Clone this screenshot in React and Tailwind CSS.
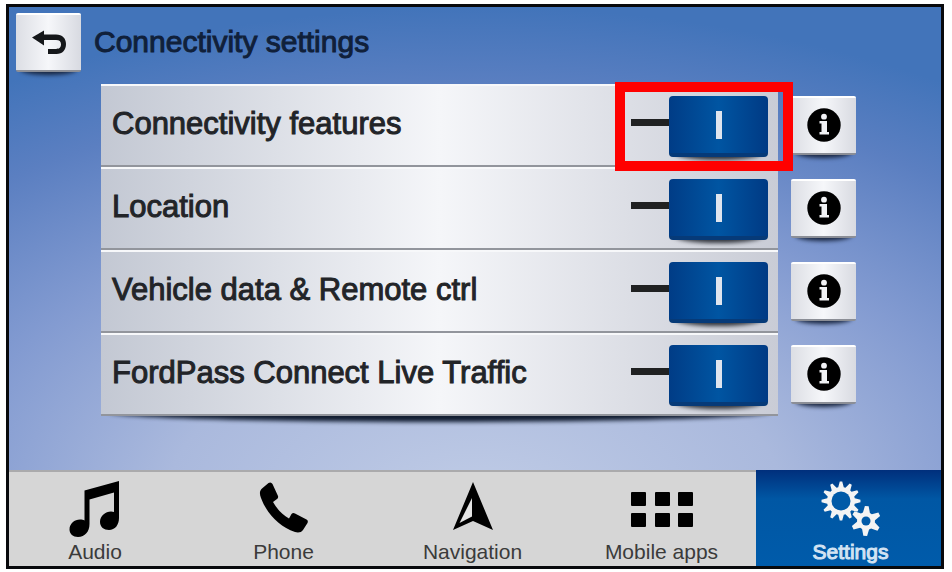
import { useState } from 'react'

const features = [
  { id: 'connectivity', label: 'Connectivity features', highlighted: true },
  { id: 'location', label: 'Location' },
  { id: 'vehicle-data', label: 'Vehicle data & Remote ctrl' },
  { id: 'live-traffic', label: 'FordPass Connect Live Traffic' },
]

function BackIcon() {
  return (
    <svg viewBox="0 0 36 26" className="h-[26px] w-9" aria-hidden="true">
      <path d="M1 7.500 L13 0.500 V4.500 H25 C31.500 4.500 35 8.500 35 14 C35 20 31.500 24 25.500 24 H17 V19 H25 C28.500 19 30 17.200 30 14.300 C30 11.500 28.500 10 25 10 H13 V15.500 Z" fill="#15171a" />
    </svg>
  )
}

function InfoIcon() {
  return (
    <svg viewBox="0 0 34 36" className="h-9 w-[34px]" aria-hidden="true">
      <circle cx="17" cy="17" r="16.700" fill="#000" />
      <circle cx="17" cy="8.700" r="2.900" fill="#f1f2f5" />
      <path d="M12.500 13 H20 V24 H22 V26.500 H12.500 V24 H14.500 V15.500 H12.500 Z" fill="#f1f2f5" />
    </svg>
  )
}

function AudioIcon() {
  return (
    <svg viewBox="0 0 52 56" className="h-14 w-[52px]" aria-hidden="true">
      <path d="M15.500 9.500 L50 0 V37 C50 44 46 49 40 49 C35 49 31 46 31 41 C31 35 36.500 30.500 42 30.500 C43.200 30.500 44.300 30.700 45 31 V11.500 L20.500 18.500 V43 C20.500 50.500 16 56 9 56 C4 56 0.500 53 0.500 48.500 C0.500 42.500 5.500 38.500 11 38.500 C12.800 38.500 14.500 38.800 15.500 39.500 Z" fill="#000" />
    </svg>
  )
}

function PhoneIcon() {
  return (
    <svg viewBox="0 0 50 56" className="h-14 w-[50px]" aria-hidden="true">
      <path d="M3 7.500 L9.500 2 Q12 0.500 13.500 3 L19 15 Q19.500 17 18 18 L14 21 C17.500 27.500 23 33.500 30 37.500 L32.500 33 Q34 31.500 36 32.500 L47.500 38.500 Q49.500 39.500 48.500 42 L44 49 C42.500 51.500 39 52 36 51 C20 45.500 7.500 32 2 17 C0.500 13 0.300 10 3 7.500 Z" fill="#000" />
    </svg>
  )
}

function NavigationIcon() {
  return (
    <svg viewBox="0 0 40 56" className="h-14 w-10" aria-hidden="true">
      <path d="M20 1 L40 49 L20 40 L0 49 Z" fill="#000" />
      <path d="M19 17 V35.500 L6.500 42 Z" fill="#e4e4e4" />
    </svg>
  )
}

function AppsIcon() {
  return (
    <svg viewBox="0 0 62 36" className="h-9 w-[62px]" aria-hidden="true">
      {[0, 24, 47].map((x) => (
        <g key={x} fill="#000">
          <rect x={x} y="1" width="15" height="14" rx="1" />
          <rect x={x} y="22" width="15" height="14" rx="1" />
        </g>
      ))}
    </svg>
  )
}

// Points of a gear outline with pointed teeth
function gearPoints(cx, cy, outer, inner, teeth, turn = 0) {
  const points = []
  for (let i = 0; i < teeth; i++) {
    const corners = [[-0.38, inner], [-0.12, outer], [0.12, outer], [0.38, inner]]
    corners.forEach(([shift, radius]) => {
      const angle = ((i + shift + turn) / teeth) * Math.PI * 2 - Math.PI / 2
      points.push(`${cx + radius * Math.cos(angle)},${cy + radius * Math.sin(angle)}`)
    })
  }
  return points.join(' ')
}

function SettingsIcon() {
  return (
    <svg viewBox="0 0 60 56" className="h-14 w-[60px]" aria-hidden="true">
      <polygon points={gearPoints(20, 20, 19.5, 14, 12)} fill="#f4f4f4" />
      <circle cx="20" cy="20" r="9.500" fill="#005aa8" />
      <polygon points={gearPoints(45, 40, 15, 9, 6, 0.05)} fill="#f4f4f4" />
      <circle cx="45" cy="40" r="4.500" fill="#005aa8" />
    </svg>
  )
}

const tabs = [
  { label: 'Audio', Icon: AudioIcon, style: 'pr-2' },
  { label: 'Phone', Icon: PhoneIcon },
  { label: 'Navigation', Icon: NavigationIcon },
  { label: 'Mobile apps', Icon: AppsIcon },
  { label: 'Settings', Icon: SettingsIcon, style: 'pl-1', active: true },
]

// Light key with a curved shadow under its bottom edge
function KeyButton({ label, children }) {
  return (
    <div className="relative isolate h-[59px] w-[65px] shrink-0">
      <span className="absolute inset-x-1 -bottom-[3px] -z-10 h-3 rounded-[50%] bg-[#18253f] blur-[2px]" />
      <button
        type="button"
        aria-label={label}
        className="flex h-full w-full items-center justify-center rounded-xs border-t-2 border-b-2 border-t-white border-b-[#8b8e96] bg-linear-to-r from-[#dcdee4] via-[#f6f7fa] to-[#d8dae1]"
      >
        {children}
      </button>
    </div>
  )
}

function FeatureRow({ feature, checked, onChange }) {
  return (
    <li className="flex h-[83px] items-center border-t-2 border-b-2 border-t-[#f7f8fa] border-b-[#92959c] pt-[2px] pr-[10px] pl-[11px]">
      <label
        htmlFor={feature.id}
        className="flex-1 pb-[6px] text-[31px] leading-8 whitespace-nowrap text-[#222428] [-webkit-text-stroke:1px_#222428]"
      >
        {feature.label}
      </label>
      <div className="relative flex items-center">
        <span className="mb-2 h-[7px] w-[38px] bg-[#202122]" />
        <div className="relative isolate h-[61px] w-[99px]">
          <span className="absolute inset-x-1 -bottom-[3px] -z-10 h-4 rounded-[50%] bg-[#30343c] blur-[2px]" />
          <input
            id={feature.id}
            type="checkbox"
            role="switch"
            checked={checked}
            onChange={onChange}
            className="flex h-full w-full appearance-none items-center justify-center rounded-[4px] border-b-4 border-[#063a78] bg-linear-to-r from-[#003c86] via-[#0055a2] to-[#003a84] before:h-7 before:w-[6px] before:bg-[#dfe5ee] before:content-['']"
          />
        </div>
        {feature.highlighted && (
          <span className="pointer-events-none absolute -top-[14px] -right-[25px] -bottom-[14px] -left-4 z-10 border-10 border-[#ff0000]" />
        )}
      </div>
    </li>
  )
}

export default function App() {
  const [enabled, setEnabled] = useState({
    connectivity: true,
    location: true,
    'vehicle-data': true,
    'live-traffic': true,
  })

  const toggle = (id) => setEnabled((prev) => ({ ...prev, [id]: !prev[id] }))

  return (
    <div className="flex min-h-screen flex-col bg-white pt-1 pr-2 pb-[3px] pl-[6px] font-['Liberation_Sans',Arial,sans-serif]">
      <div className="flex flex-1 flex-col border-3 border-[#08090c]">
        <main className="flex-1 bg-[radial-gradient(ellipse_95%_108%_at_50%_108%,#c0cce6_0%,#aab9dd_35%,#839bd1_60%,#5b7fc1_84%,#4274ba_100%)] pt-[6px] pr-[85px] pl-[7px]">
          <header className="flex items-center gap-[13px]">
            <KeyButton label="Back">
              <BackIcon />
            </KeyButton>
            <h1 className="pb-[2px] text-[30px] leading-8 text-[#10203a] [-webkit-text-stroke:1px_#10203a]">
              Connectivity settings
            </h1>
          </header>

          <div className="mt-3 flex gap-[13px] pl-[85px]">
            <div className="relative isolate z-10 flex-1">
              <span className="absolute inset-x-2 -bottom-[6px] -z-10 h-5 rounded-[50%] bg-[#111c30] blur-[2px]" />
              <ul className="bg-linear-to-r from-[#c3c8d3] via-[#f5f6f9] to-[#c9ccd6]">
                {features.map((feature) => (
                  <FeatureRow
                    key={feature.id}
                    feature={feature}
                    checked={enabled[feature.id]}
                    onChange={() => toggle(feature.id)}
                  />
                ))}
              </ul>
            </div>
            <div className="flex flex-col gap-6 pt-3">
              {features.map((feature) => (
                <KeyButton key={feature.id} label={`About ${feature.label}`}>
                  <InfoIcon />
                </KeyButton>
              ))}
            </div>
          </div>
        </main>

        <nav className="grid h-24 grid-cols-[180fr_189fr_189fr_189fr_185fr] border-t-2 border-[#aaaaac] bg-[#d6d6d6]">
          {tabs.map(({ label, Icon, style, active }) => (
            <button
              key={label}
              type="button"
              aria-current={active ? 'page' : undefined}
              className={`flex flex-col items-center ${style || ''} ${
                active
                  ? '-mt-[2px] bg-linear-to-b from-[#002f7c] via-[#0057a4] via-30% to-[#005baa] pt-[2px] text-[#d3e3f3] [-webkit-text-stroke:1px_#d3e3f3]'
                  : 'text-[#3b3b3b]'
              }`}
            >
              <span className="flex h-[70px] items-center pt-1">
                <Icon />
              </span>
              <span className="text-[21px] leading-5">{label}</span>
            </button>
          ))}
        </nav>
      </div>
    </div>
  )
}
